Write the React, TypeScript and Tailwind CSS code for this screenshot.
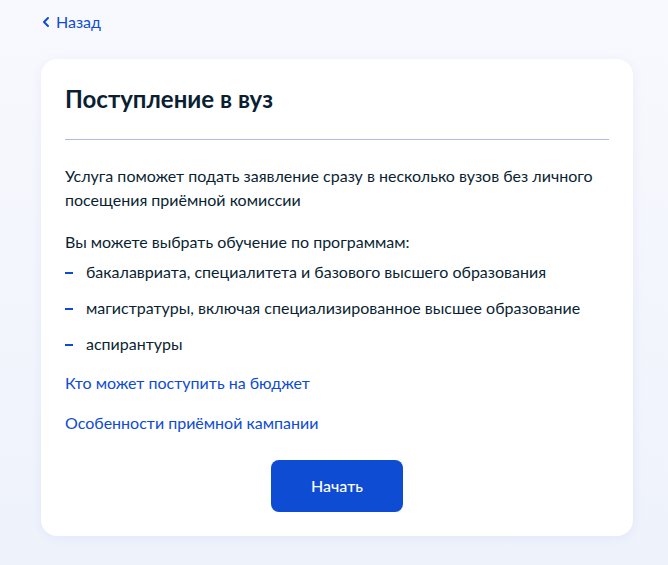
import { ChevronLeft } from "lucide-react"

const programs = [
  "бакалавриата, специалитета и базового высшего образования",
  "магистратуры, включая специализированное высшее образование",
  "аспирантуры",
]

export default function App() {
  return (
    <div
      className="min-h-[565px] bg-gradient-to-b from-[#f8f9fe] to-[#eef2fb] pl-[41px] pr-[35px] pt-[12px] pb-[29px] text-[#0b1f33]"
      style={{ fontFamily: "Lato, 'Noto Sans', sans-serif" }}
    >
      <a href="#" className="-ml-[3px] flex h-[20px] items-center gap-[2px] text-[16px] text-[#0d4cd3]">
        <ChevronLeft className="size-[16px]" strokeWidth={3} />
        Назад
      </a>

      <div className="mt-[27px] rounded-[16px] bg-white px-[24px] pt-[24px] pb-[24px] shadow-[0_2px_12px_rgba(13,76,211,0.06)]">
        <h1 className="text-[24px] font-bold leading-[32px]">Поступление в вуз</h1>
        <div className="mt-[24px] h-px bg-[#b0bce6]" />

        <div className="mt-[24px] text-[16px] leading-[24px]">
          <p>
            Услуга поможет подать заявление сразу в несколько вузов без личного посещения приёмной комиссии
          </p>
          <p className="mt-[18px]">Вы можете выбрать обучение по программам:</p>
          <ul className="mt-[6px] flex flex-col gap-[12px]">
            {programs.map((item) => (
              <li key={item} className="flex items-center">
                <span className="mr-[13px] mt-[1px] h-[2px] w-[8px] bg-[#0d4cd3]" />
                {item}
              </li>
            ))}
          </ul>
          <a href="#" className="mt-[15px] block text-[#0d4cd3]">
            Кто может поступить на бюджет
          </a>
          <a href="#" className="mt-[16px] block text-[#0d4cd3]">
            Особенности приёмной кампании
          </a>
        </div>

        <div className="mt-[25px] flex justify-center">
          <button
            type="button"
            className="h-[52px] w-[132px] rounded-[8px] bg-[#0d4cd3] text-[16px] font-medium text-white"
          >
            Начать
          </button>
        </div>
      </div>
    </div>
  )
}
